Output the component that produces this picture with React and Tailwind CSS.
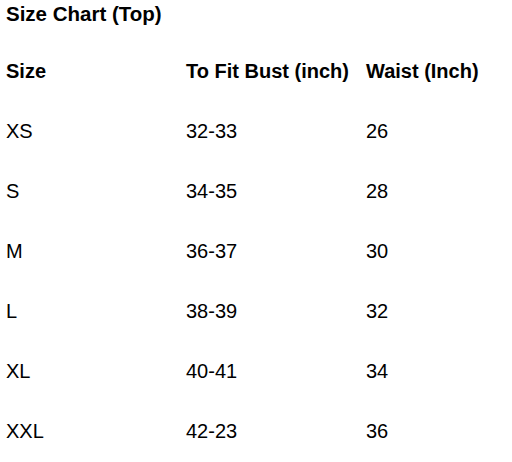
export default function App() {
  const rows = [
    ["XS", "32-33", "26"],
    ["S", "34-35", "28"],
    ["M", "36-37", "30"],
    ["L", "38-39", "32"],
    ["XL", "40-41", "34"],
    ["XXL", "42-23", "36"],
  ];
  return (
    <div className="w-[512px] h-[462px] bg-white text-black pl-[6px] pt-[1px] font-['Liberation_Sans',Arial,sans-serif] text-[20px]">
      <div className="h-[27px] flex items-center font-bold text-[20.5px]">Size Chart (Top)</div>
      <div className="mt-[13px] grid grid-cols-[180px_180px_1fr]">
        <div className="h-[60px] flex items-center font-bold">Size</div>
        <div className="h-[60px] flex items-center font-bold">To Fit Bust (inch)</div>
        <div className="h-[60px] flex items-center font-bold">Waist (Inch)</div>
        {rows.map((r) => (
          <>
            <div key={r[0] + "a"} className="h-[60px] flex items-center">{r[0]}</div>
            <div key={r[0] + "b"} className="h-[60px] flex items-center">{r[1]}</div>
            <div key={r[0] + "c"} className="h-[60px] flex items-center">{r[2]}</div>
          </>
        ))}
      </div>
    </div>
  );
}
